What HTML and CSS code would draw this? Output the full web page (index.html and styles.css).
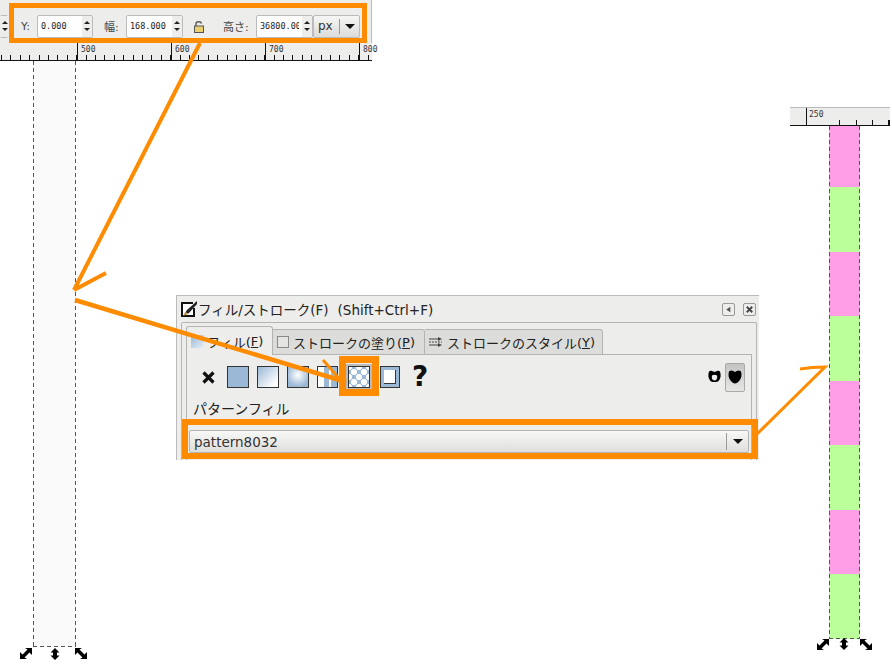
FILE: index.html
```html
<!DOCTYPE html>
<html lang="ja">
<head>
  <meta charset="UTF-8" />
  <title>パターンフィル</title>
  <link rel="stylesheet" href="styles.css">
</head>
<body>
  <div class="canvas">

    <div class="crop-top">
      <div class="toolbar">
        <div class="spin stub"><span class="spin-btns"><i class="up"></i><i class="down"></i></span></div>
        <span class="tool-label label-y">Y:</span>
        <div class="spin w-y"><span class="num">0.000</span><span class="spin-btns"><i class="up"></i><i class="down"></i></span></div>
        <span class="tool-label label-w">幅:</span>
        <div class="spin w-w"><span class="num">168.000</span><span class="spin-btns"><i class="up"></i><i class="down"></i></span></div>
        <svg class="lock" width="12" height="13" viewBox="0 0 12 13">
          <path d="M3 6V3.500C3 1.500 8 1 8.500 3.500" fill="none" stroke="#555" stroke-width="1.400"/>
          <rect x="1.500" y="6" width="9" height="6.500" fill="#e8d070" stroke="#555"/>
        </svg>
        <span class="tool-label label-h">高さ:</span>
        <div class="spin w-h"><span class="num">36800.00</span><span class="spin-btns"><i class="up"></i><i class="down"></i></span></div>
        <div class="unit"><span class="unit-text">px</span><span class="unit-arrow"><i></i></span></div>
      </div>
      <div class="ruler ruler-top">
        <span class="major">500</span>
        <span class="major">600</span>
        <span class="major">700</span>
        <span class="major">800</span>
      </div>
    </div>

    <div class="strip strip-left"></div>

    <div class="crop-right">
      <div class="ruler ruler-right"><span class="major">250</span></div>
      <div class="strip strip-right">
        <div class="band pink"></div>
        <div class="band green"></div>
        <div class="band pink"></div>
        <div class="band green"></div>
        <div class="band pink"></div>
        <div class="band green"></div>
        <div class="band pink"></div>
        <div class="band green"></div>
      </div>
    </div>

    <div class="dialog">
      <div class="titlebar">
        <svg class="title-icon" width="18" height="18" viewBox="0 0 18 18">
          <path d="M13 3H2v13h12V8" fill="#fff" stroke="#111" stroke-width="2"/>
          <path d="M17 1L7 10l-4 6 6-3L17 4z" fill="#222"/>
          <path d="M6 12l-3 4 5-2z" fill="#d9a441"/>
        </svg>
        <span class="title-text">フィル/ストローク(F)<span class="title-keys">(Shift+Ctrl+F)</span></span>
        <span class="win-btn"><svg width="11" height="11" viewBox="0 0 12 12"><path d="M8 3v6L3.500 6z" fill="#555"/></svg></span>
        <span class="win-btn"><svg width="11" height="11" viewBox="0 0 12 12"><path d="M3 3l6 6M9 3l-6 6" stroke="#444" stroke-width="2"/></svg></span>
      </div>
      <div class="notebook">
        <div class="tabs">
          <div class="tab active"><span class="tab-fill-icon"></span>フィル(<u>F</u>)</div>
          <div class="tab"><span class="tab-stroke-icon"></span>ストロークの塗り(<u>P</u>)</div>
          <div class="tab">
            <svg class="tab-style-icon" width="13" height="12" viewBox="0 0 13 12">
              <path d="M0 3h10M0 9h10" stroke="#444"/>
              <path d="M0 6h13" stroke="#444" stroke-dasharray="2 1"/>
              <path d="M9 1l4 2-4 2zM9 7l4 2-4 2z" fill="#444"/>
            </svg>ストロークのスタイル(<u>Y</u>)
          </div>
        </div>
        <div class="panel">
          <div class="paint-row">
            <span class="paint-none"><svg width="13" height="13" viewBox="0 0 13 13"><path d="M1.500 1.500l10 10M11.500 1.500l-10 10" stroke="#111" stroke-width="3.200"/></svg></span>
            <span class="swatch flat"></span>
            <span class="swatch linear"></span>
            <span class="swatch radial"></span>
            <span class="swatch mesh"></span>
            <span class="swatch-on"><span class="swatch pattern"></span></span>
            <span class="swatch swatch-frame"><i></i></span>
            <span class="paint-unset">?</span>
            <span class="rule-btns">
              <svg width="13" height="14" viewBox="0 0 13 14"><path fill-rule="evenodd" d="M1 1.500C2.500 0 4 1 6.500 2 9 1 10.500 0 12 1.500c1 3.500 1 6-1 9-1.500 2-7.500 2-9 0-2-3-2-5.500-1-9zM4 5.500c-.500 2 0 4 1 4.500 1 .500 2 .500 3 0 1-.500 1.500-2.500 1-4.500-1.500-1-3.500-1-5 0z"/></svg>
              <span class="rule-on"><svg width="14" height="14" viewBox="0 0 14 14"><path d="M1 1.500C3 0 5 .500 7 2c2-1.500 4-2 6-.500 1 3.500.500 6.500-1.500 9C10 12.500 8.500 13.500 7 13.500s-3-1-4.500-3C.500 8 0 5 1 1.500z"/></svg></span>
            </span>
          </div>
          <div class="pattern-label">パターンフィル</div>
          <div class="combo">
            <span class="combo-text">pattern8032</span>
            <span class="combo-arrow"><i></i></span>
          </div>
        </div>
      </div>
    </div>

    <!-- annotations and selection handles -->
    <svg class="overlay" width="892" height="672" viewBox="0 0 892 672">
      <g fill="none" stroke="#ff8c00">
        <rect x="11.500" y="5.500" width="353" height="35" stroke-width="5"/>
        <rect x="185" y="422" width="570" height="34" stroke-width="6"/>
        <rect x="342.500" y="359.500" width="33" height="33" stroke-width="7"/>
        <path d="M200 43L74 290M74 290L106 273" stroke-width="4"/>
        <path d="M75 300L346 382" stroke-width="4.500"/>
        <path d="M323 360L343 383" stroke-width="3"/>
        <path d="M757 434L825 367Q812 367 800 369" stroke-width="3"/>
      </g>
      <g fill="#000">
        <path transform="translate(20 648)" d="M0 11V4l2.500 2.500 5-5L5 0h7v7L9.500 4.500l-5 5L7 11z"/>
        <path transform="translate(75 648)" d="M12 11V4L9.500 6.500l-5-5L7 0H0v7l2.500-2.500 5 5L5 11z"/>
        <path transform="translate(817 639)" d="M0 11V4l2.500 2.500 5-5L5 0h7v7L9.500 4.500l-5 5L7 11z"/>
        <path transform="translate(860 639)" d="M12 11V4L9.500 6.500l-5-5L7 0H0v7l2.500-2.500 5 5L5 11z"/>
        <path d="M55 648l4.500 4.500H57v3h2.500L55 660l-4.500-4.500H53v-3h-2.500z"/>
        <path d="M844 638l4.500 4.500H846v3h2.500L844 650l-4.500-4.500H842v-3h-2.500z"/>
      </g>
    </svg>
  </div>
</body>
</html>
```

FILE: styles.css
```css
html, body {
  margin: 0;
  padding: 0;
  background: #fff;
}

.canvas {
  position: relative;
  width: 892px;
  height: 672px;
  overflow: hidden;
  background: #fff;
  font-family: "DejaVu Sans", "Noto Sans CJK JP", sans-serif;
  color: #222;
}

/* top left crop: toolbar and ruler */
.crop-top {
  position: absolute;
  left: 0;
  top: 0;
  width: 372px;
}

.toolbar {
  display: flex;
  align-items: center;
  height: 43px;
  padding-top: 9px;
  box-sizing: border-box;
  background: #ededeb;
  border-right: 1px solid #bbb;
  font-size: 11px;
}

.tool-label {
  color: #444;
  white-space: nowrap;
}
.label-y { margin-left: 13px; width: 16px; }
.label-w { margin-left: 11px; width: 22px; }
.label-h { margin-left: 18px; width: 33px; }

.spin {
  display: flex;
  align-items: center;
  box-sizing: border-box;
  height: 23px;
  background: #fff;
  border: 1px solid #bbb;
  border-radius: 2px;
}
.spin.stub { width: 8px; border-left: 0; }
.w-y { width: 56px; }
.w-w { width: 57px; }
.w-h { width: 57px; }

.num {
  flex: 1;
  width: 0;
  padding-left: 3px;
  font-family: "DejaVu Sans Mono", monospace;
  font-size: 8.500px;
  overflow: hidden;
  white-space: nowrap;
}
.w-h .num { margin-right: 3px; }

.spin-btns {
  display: flex;
  flex-direction: column;
  justify-content: center;
  gap: 4px;
  width: 10px;
  height: 100%;
  background: #ededeb;
  flex: none;
}
.spin-btns i {
  display: block;
  width: 0;
  margin: 0 auto;
  border-left: 3px solid transparent;
  border-right: 3px solid transparent;
}
.spin-btns .up { border-bottom: 3px solid #222; }
.spin-btns .down { border-top: 3px solid #222; }

.lock { margin-left: 10px; flex: none; }

.unit {
  display: flex;
  align-items: center;
  box-sizing: border-box;
  width: 47px;
  height: 23px;
  border: 1px solid #bbb;
  border-radius: 2px;
  background: linear-gradient(#f6f6f4, #dcdcda);
}
.unit-text {
  flex: 1;
  padding-left: 4px;
  font-size: 12px;
  color: #333;
}
.unit-arrow {
  display: flex;
  align-items: center;
  justify-content: center;
  width: 19px;
  height: 15px;
  border-left: 1px solid #999;
}
.unit-arrow i, .combo-arrow i {
  display: block;
  border-left: 5px solid transparent;
  border-right: 5px solid transparent;
  border-top: 5px solid #111;
}

/* rulers */
.ruler {
  display: flex;
  box-sizing: border-box;
  background-color: #ededeb;
  background-size: 100% 5px;
  background-repeat: no-repeat;
  border-bottom: 1px solid #111;
  font-family: "DejaVu Sans Mono", monospace;
  font-size: 8px;
  color: #333;
}
.ruler-top {
  height: 18px;
  padding-left: 77px;
  background-image: repeating-linear-gradient(90deg, #111 0 1px, transparent 1px 9.400px);
  background-position: 1px bottom;
}
.ruler-top .major {
  flex: none;
  width: 94px;
  box-sizing: border-box;
  padding: 2px 0 0 3px;
  border-left: 1px solid #111;
}

/* dashed selection box round a column */
.strip {
  position: absolute;
  box-sizing: border-box;
}
.strip::after {
  content: "";
  position: absolute;
  inset: 0;
  background-image:
    repeating-linear-gradient(#555 0 4px, transparent 4px 7px),
    repeating-linear-gradient(#555 0 4px, transparent 4px 7px),
    repeating-linear-gradient(90deg, #555 0 4px, transparent 4px 7px);
  background-size: 1px 100%, 1px 100%, 100% 1px;
  background-position: left top, right top, left bottom;
  background-repeat: no-repeat;
}
.strip-left {
  left: 33px;
  top: 61px;
  width: 43px;
  height: 586px;
  background-color: #fafafa;
}

/* right crop: ruler and striped column */
.crop-right {
  position: absolute;
  left: 790px;
  top: 107px;
  width: 100px;
}
.ruler-right {
  height: 19px;
  padding-left: 16px;
  border-top: 1px solid #bbb;
  background-image: repeating-linear-gradient(90deg, #111 0 1px, transparent 1px 16.500px);
  background-position: 49px bottom;
}
.ruler-right .major {
  padding: 2px 0 0 2px;
  border-left: 1px solid #111;
}

.strip-right {
  display: flex;
  flex-direction: column;
  left: 39px;
  top: 19px;
  width: 31px;
  height: 513px;
}
.band { flex: 1; }
.band:first-child { flex: 0 0 61px; }
.pink { background: #ff9ee6; }
.green { background: #baff99; }

/* fill and stroke dialog */
.dialog {
  position: absolute;
  left: 176px;
  top: 295px;
  width: 583px;
  height: 165px;
  box-sizing: border-box;
  background: #ededeb;
  border-top: 1px solid #bbb;
  border-left: 1px solid #bbb;
  overflow: hidden;
}

.titlebar {
  display: flex;
  align-items: center;
  gap: 8px;
  height: 26px;
  padding-left: 3px;
  padding-right: 3px;
}
.title-icon { margin-right: -8px; flex: none; }
.title-text {
  flex: 1;
  font-size: 13.500px;
  color: #222;
}
.title-keys { margin-left: 9px; }
.win-btn {
  box-sizing: border-box;
  width: 13px;
  height: 13px;
  border: 1px solid #999;
  border-radius: 2px;
  line-height: 0;
}

.notebook {
  box-sizing: border-box;
  height: 140px;
  margin-left: 4px;
  width: 576px;
  padding: 3px 4px 0;
  border: 1px solid #b4b4b2;
  border-bottom: 0;
  background: #ededeb;
  border-radius: 2px 2px 0 0;
}

.tabs {
  display: flex;
  align-items: flex-end;
  height: 29px;
  font-size: 13px;
}
.tab {
  display: flex;
  align-items: center;
  box-sizing: border-box;
  height: 26px;
  padding-left: 4px;
  white-space: nowrap;
  background: #dcdcda;
  border: 1px solid #b4b4b2;
  border-left: 0;
  border-radius: 0 3px 0 0;
}
.tab:nth-child(1) { width: 87px; }
.tab:nth-child(2) { width: 152px; }
.tab:nth-child(3) { width: 178px; }
.tab.active {
  height: 29px;
  background: #ededeb;
  border-left: 1px solid #b4b4b2;
  border-bottom: 0;
  border-radius: 3px 3px 0 0;
}
.tab-fill-icon {
  width: 13px;
  height: 13px;
  margin-right: 3px;
  background: linear-gradient(135deg, #9bb8d6, #e6eef6);
}
.tab-stroke-icon {
  box-sizing: border-box;
  width: 12px;
  height: 12px;
  margin-right: 4px;
  border: 1px solid #888;
  background: #e4e4e2;
}
.tab-style-icon { margin-right: 5px; }

.panel {
  box-sizing: border-box;
  height: 110px;
  padding: 0 4px 0 2px;
  border: 1px solid #b4b4b2;
  margin-top: -1px;
  background: #ededeb;
}

.paint-row {
  display: flex;
  align-items: center;
  height: 38px;
  padding-top: 6px;
  box-sizing: border-box;
  margin-right: -1px;
}
.paint-none {
  display: flex;
  justify-content: center;
  width: 38px;
}
.swatch {
  display: block;
  flex: none;
  box-sizing: border-box;
  width: 22px;
  height: 22px;
  margin-right: 8px;
  border: 1px solid #333;
}
.flat { background: #9bb8d6; }
.linear { background: linear-gradient(135deg, #9bb8d6, #fff 85%); }
.radial { background: radial-gradient(circle at 50% 40%, #fff, #9bb8d6 75%); }
.mesh {
  width: 21px;
  background: linear-gradient(90deg, #fff 0 30%, #9bb8d6 30% 60%, #fff 60% 70%, #9bb8d6 70%);
}
.swatch-on {
  display: flex;
  align-items: center;
  justify-content: center;
  flex: none;
  width: 26px;
  height: 26px;
  margin-right: 8px;
  background: #bbb;
}
.pattern {
  margin: 0;
  background-color: #9bb8d6;
  background-image:
    radial-gradient(circle, #fff 0 2.800px, transparent 3.300px),
    radial-gradient(circle, #fff 0 2.800px, transparent 3.300px);
  background-size: 10px 10px;
  background-position: 0 0, 5px 5px;
}
.swatch-frame {
  background: #9bb8d6;
  padding: 3px;
  width: 20px;
  margin-right: 0;
}
.swatch-frame i {
  display: block;
  width: 100%;
  height: 100%;
  background: #fff;
  box-shadow: inset -1px -1px 0 #333;
}
.paint-unset {
  width: 40px;
  text-align: center;
  font-size: 28px;
  font-weight: bold;
  color: #111;
  line-height: 1;
}
.rule-btns {
  display: flex;
  align-items: center;
  gap: 4px;
  margin-left: auto;
  margin-right: 3px;
}
.rule-on {
  display: flex;
  align-items: center;
  justify-content: center;
  box-sizing: border-box;
  width: 20px;
  height: 29px;
  border: 1px solid #aaa;
  border-radius: 2px;
  background: linear-gradient(#c4c4c2, #e6e6e4);
}

.pattern-label {
  margin: 8px 0 0 4px;
  font-size: 14px;
  line-height: 17px;
  color: #222;
}

.combo {
  display: flex;
  align-items: center;
  box-sizing: border-box;
  width: 560px;
  height: 23px;
  margin-top: 12px;
  border: 1px solid #b4b4b2;
  border-radius: 2px;
  background: linear-gradient(#f8f8f6, #dededc);
}
.combo-text {
  flex: 1;
  padding-left: 4px;
  font-size: 13.500px;
  color: #333;
}
.combo-arrow {
  display: flex;
  align-items: center;
  justify-content: center;
  width: 21px;
  height: 17px;
  border-left: 1px solid #999;
}

.overlay {
  position: absolute;
  left: 0;
  top: 0;
}
```
